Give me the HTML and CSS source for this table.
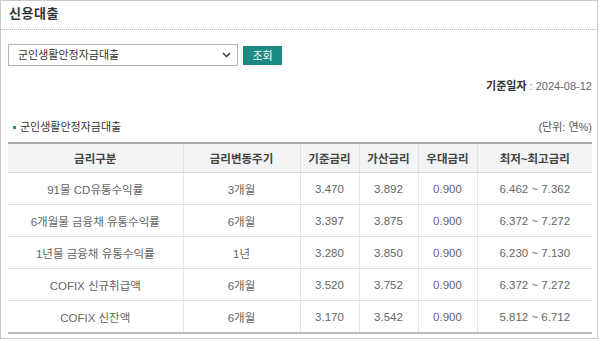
FILE: index.html
```html
<!DOCTYPE html>
<html lang="ko">
<head>
<meta charset="utf-8">
<link rel="stylesheet" href="styles.css">
</head>
<body>
<div class="frame">
  <div class="title-bar"><h1 class="title">신용대출</h1></div>
  <div class="content">
    <div class="search-row">
      <div class="select">
        <span class="select-text">군인생활안정자금대출</span>
        <svg class="chev" width="9" height="6" viewBox="0 0 9 6"><path d="M1 1 L4.5 4.5 L8 1" fill="none" stroke="#444" stroke-width="1.6"/></svg>
      </div>
      <button class="btn">조회</button>
    </div>
    <div class="date-row"><span class="date-label">기준일자</span><span class="colon"> : </span><span class="date">2024-08-12</span></div>
    <div class="section-row">
      <span class="section-title"><span class="bullet"></span>군인생활안정자금대출</span>
      <span class="unit">(단위: 연%)</span>
    </div>
    <table class="rates">
      <colgroup>
        <col class="c1"><col class="c2"><col class="c3"><col class="c4"><col class="c5"><col class="c6">
      </colgroup>
      <thead>
        <tr><th>금리구분</th><th>금리변동주기</th><th>기준금리</th><th>가산금리</th><th>우대금리</th><th>최저~최고금리</th></tr>
      </thead>
      <tbody>
        <tr><td>91물 CD유통수익률</td><td>3개월</td><td>3.470</td><td>3.892</td><td>0.900</td><td>6.462 ~ 7.362</td></tr>
        <tr><td>6개월물 금융채 유통수익률</td><td>6개월</td><td>3.397</td><td>3.875</td><td>0.900</td><td>6.372 ~ 7.272</td></tr>
        <tr><td>1년물 금융채 유통수익률</td><td>1년</td><td>3.280</td><td>3.850</td><td>0.900</td><td>6.230 ~ 7.130</td></tr>
        <tr><td>COFIX 신규취급액</td><td>6개월</td><td>3.520</td><td>3.752</td><td>0.900</td><td>6.372 ~ 7.272</td></tr>
        <tr><td>COFIX 신잔액</td><td>6개월</td><td>3.170</td><td>3.542</td><td>0.900</td><td>5.812 ~ 6.712</td></tr>
      </tbody>
    </table>
  </div>
</div>
</body>
</html>
```
FILE: styles.css
```css
html, body {
  margin: 0;
  padding: 0;
  background: #fff;
}
body {
  font-family: "Liberation Sans", "Noto Sans CJK KR", sans-serif;
  color: #333;
}
.frame {
  box-sizing: border-box;
  width: 598px;
  height: 339px;
  border: 1px solid #c9c9c9;
  overflow: hidden;
}
.title-bar {
  box-sizing: border-box;
  height: 29px;
  padding: 3px 0 0 8px;
  border-bottom: 1px dotted #bdbdbd;
}
.title {
  margin: 0;
  font-size: 13px;
  line-height: 20px;
  font-weight: bold;
  color: #333;
  letter-spacing: 0.5px;
}
.content {
  padding: 0 5px 0 7px;
}
.search-row {
  display: flex;
  align-items: center;
  margin-top: 14px;
  height: 22px;
}
.select {
  box-sizing: border-box;
  width: 230px;
  height: 22px;
  border: 1px solid #b5b5b5;
  display: flex;
  align-items: center;
  justify-content: space-between;
  padding: 0 6px 0 9px;
  font-size: 11px;
  color: #333;
}
.select-text {
  line-height: 20px;
}
.btn {
  box-sizing: border-box;
  margin-left: 5px;
  width: 39px;
  height: 19px;
  border: 0;
  padding: 0;
  background: #1d8884;
  color: #fff;
  font-family: "Noto Sans CJK KR", sans-serif;
  font-size: 11px;
  line-height: 19px;
}
.date-row {
  margin-top: 12px;
  text-align: right;
  line-height: 16px;
  font-size: 11px;
}
.date-label {
  font-weight: bold;
  color: #333;
}
.colon {
  color: #777;
}
.date {
  font-size: 11px;
  color: #666;
}
.section-row {
  margin-top: 25px;
  display: flex;
  justify-content: space-between;
  align-items: center;
  line-height: 16px;
  font-size: 11px;
}
.section-title {
  display: flex;
  align-items: center;
  padding-left: 5px;
  color: #333;
}
.bullet {
  width: 3px;
  height: 3px;
  background: #2d8f8b;
  margin-right: 4px;
}
.unit {
  color: #555;
}
.rates {
  margin-top: 7px;
  width: 584px;
  border-collapse: collapse;
  table-layout: fixed;
  border-top: 2px solid #a9a9a9;
  border-bottom: 2px solid #bdbdbd;
  font-size: 12px;
}
.c1 { width: 175px; }
.c2 { width: 117px; }
.c3 { width: 59px; }
.c4 { width: 59px; }
.c5 { width: 59px; }
.c6 { width: 115px; }
.rates th {
  height: 28px;
  padding: 0;
  background: #f1f3f5;
  font-size: 11.5px;
  font-weight: bold;
  color: #444;
  border-bottom: 1px solid #d8d8d8;
  border-left: 1px solid #e0e0e0;
}
.rates td {
  height: 31px;
  padding: 0;
  text-align: center;
  font-size: 11.5px;
  color: #666;
  border-bottom: 1px solid #e0e0e0;
  border-left: 1px solid #e6e6e6;
}
.rates th:first-child,
.rates td:first-child {
  border-left: 0;
}
```
